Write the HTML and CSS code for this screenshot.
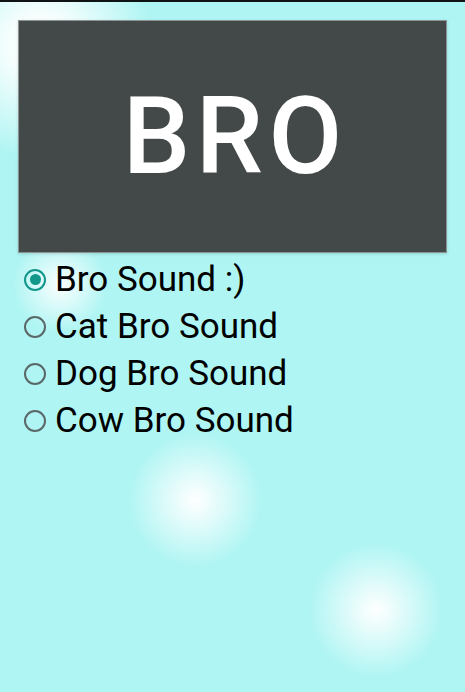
FILE: index.html
```html
<!DOCTYPE html>
<html>
<head>
<meta charset="utf-8">
<link rel="stylesheet" href="styles.css">
</head>
<body>
<div class="statusbar"></div>
<main class="screen">
  <button class="bro-btn">BRO</button>
  <div class="radios">
    <label class="radio checked"><span class="dot"></span><span class="label">Bro Sound :)</span></label>
    <label class="radio"><span class="dot"></span><span class="label">Cat Bro Sound</span></label>
    <label class="radio"><span class="dot"></span><span class="label">Dog Bro Sound</span></label>
    <label class="radio"><span class="dot"></span><span class="label">Cow Bro Sound</span></label>
  </div>
</main>
</body>
</html>
```
FILE: styles.css
```css
html, body {
  margin: 0;
  padding: 0;
  width: 465px;
  height: 692px;
  overflow: hidden;
}
body {
  font-family: Roboto, "Noto Sans", sans-serif;
  background:
    radial-gradient(circle at 40px 45px, rgba(255,255,255,1) 0, rgba(255,255,255,0.9) 30px, rgba(255,255,255,0) 115px),
    radial-gradient(circle at 60px 285px, rgba(255,255,255,0.95) 0, rgba(255,255,255,0) 48px),
    radial-gradient(circle at 195px 500px, rgba(255,255,255,1) 0, rgba(255,255,255,0.8) 14px, rgba(255,255,255,0) 68px),
    radial-gradient(circle at 376px 610px, rgba(255,255,255,1) 0, rgba(255,255,255,0.8) 14px, rgba(255,255,255,0) 68px),
    #aef5f3;
}
.statusbar {
  height: 2px;
  background: #101314;
}
.screen {
  padding: 18px 18px 0 18px;
  display: flex;
  flex-direction: column;
}
.bro-btn {
  width: 429px;
  height: 233px;
  margin: 0;
  padding: 0;
  border: 1px solid rgba(200,210,210,0.55);
  background: #434848;
  color: #ffffff;
  font-family: Roboto, "Noto Sans", sans-serif;
  font-size: 107px;
  font-weight: 500;
  letter-spacing: 0.05em;
  text-indent: 0.05em;
  box-shadow: 0 1px 3px rgba(0,0,0,0.15);
}
.radios {
  display: flex;
  flex-direction: column;
  padding-top: 3px;
}
.radio {
  display: flex;
  align-items: center;
  height: 47px;
  gap: 9px;
  padding-left: 6px;
}
.dot {
  box-sizing: border-box;
  width: 22px;
  height: 22px;
  border-radius: 50%;
  border: 2px solid #5b6868;
  display: flex;
  align-items: center;
  justify-content: center;
  flex: none;
}
.radio.checked .dot {
  border-color: #12978a;
}
.radio.checked .dot::after {
  content: "";
  width: 11px;
  height: 11px;
  border-radius: 50%;
  background: #12978a;
}
.label {
  font-size: 35px;
  color: #000000;
  line-height: 1;
}
```
